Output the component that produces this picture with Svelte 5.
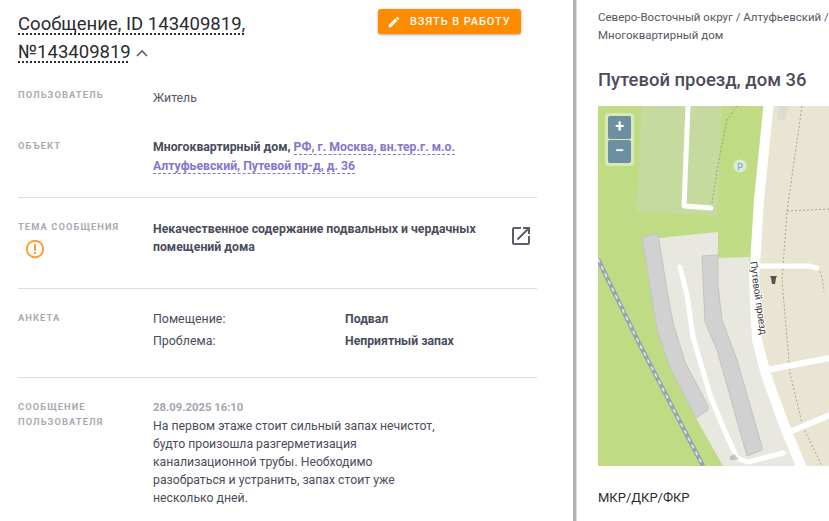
<script>
  const anketa = [
    ['Помещение:', 'Подвал'],
    ['Проблема:', 'Неприятный запах']
  ];
</script>

<div class="page">
  <section class="left">
    <header class="head">
      <h1><span class="dotted">Сообщение, ID 143409819, №143409819</span>
        <svg class="chev" viewBox="0 0 14 8" width="14" height="8"><path d="M2 7l5-5 5 5" fill="none" stroke="#5b5e6b" stroke-width="1.6"/></svg>
      </h1>
      <button class="take">
        <svg viewBox="0 0 24 24" width="14" height="14"><path fill="#fff" d="M3 17.25V21h3.75L17.81 9.94l-3.75-3.75L3 17.25zM20.71 7.04a1 1 0 0 0 0-1.41l-2.34-2.34a1 1 0 0 0-1.41 0l-1.83 1.83 3.75 3.75 1.83-1.83z"/></svg>
        <span>Взять в работу</span>
      </button>
    </header>

    <div class="row r-user">
      <div class="label">Пользователь</div>
      <div class="value plain">Житель</div>
    </div>
    <div class="row r-obj sep">
      <div class="label">Объект</div>
      <div class="value strong narrow">Многоквартирный дом, <a class="addr">РФ, г. Москва, вн.тер.г. м.о. Алтуфьевский, Путевой пр-д, д. 36</a></div>
    </div>
    <div class="row r-theme sep">
      <div class="label">Тема сообщения
        <svg class="warn" viewBox="0 0 20 20" width="20" height="20"><circle cx="10" cy="10" r="8.2" fill="none" stroke="#ff9a2e" stroke-width="1.9"/><rect x="9" y="5.3" width="2" height="6.4" fill="#ff9a2e"/><rect x="9" y="13" width="2" height="2" fill="#ff9a2e"/></svg>
      </div>
      <div class="value strong theme">Некачественное содержание подвальных и чердачных помещений дома</div>
      <svg class="ext" viewBox="0 0 24 24" width="24" height="24"><path fill="#5b5e6b" d="M19 19H5V5h7V3H5a2 2 0 0 0-2 2v14a2 2 0 0 0 2 2h14a2 2 0 0 0 2-2v-7h-2v7zM14 3v2h3.59l-9.83 9.83 1.41 1.41L19 6.41V10h2V3h-7z"/></svg>
    </div>
    <div class="row r-form sep">
      <div class="label">Анкета</div>
      <div class="qa">
        {#each anketa as [q, a]}
          <div class="q">{q}</div>
          <div class="a">{a}</div>
        {/each}
      </div>
    </div>
    <div class="row r-msg">
      <div class="label two">Сообщение пользователя</div>
      <div class="msg">
        <div class="date">28.09.2025 16:10</div>
        <p>На первом этаже стоит сильный запах нечистот, будто произошла разгерметизация канализационной трубы. Необходимо разобраться и устранить, запах стоит уже несколько дней.</p>
      </div>
    </div>
  </section>

  <section class="right">
    <div class="crumbs">Северо-Восточный округ / Алтуфьевский / Многоквартирный дом</div>
    <h2>Путевой проезд, дом 36</h2>
    <div class="map">
      <svg viewBox="598 106 231 360" width="231" height="360">
        <rect x="598" y="106" width="231" height="360" fill="#bfdc85"/>
        <polygon points="642,106 722,106 717,216 636,211" fill="#c6d99f"/>
        <polygon points="770,106 829,106 829,466 790,466 755,370 751,280" fill="#e9e5d2"/>
        <polygon points="642,237 659,238 718,232 718,258 749,257 752,300 760,360 805,466 723,466 697,420 670,368 657,330" fill="#e8e8e0"/>
        <polygon points="778,106 789,106 785,120 777,120" fill="#dcdcd0"/>

        <g fill="none" stroke="#aaa68e" stroke-width="1" stroke-dasharray="2 2">
          <path d="M802 106 L787 211 L782 280 L790 373 L803 427 L822 466"/>
          <path d="M787 211 L829 209"/>
          <path d="M818 268 Q823 276 824 292"/>
        </g>
        <path d="M737 106 L727 120 L718 165 L712 203" fill="none" stroke="#8fa66a" stroke-width="1" stroke-dasharray="2 2"/>

        <path d="M598 259 L610 284 L640 345 L703 466" fill="none" stroke="#97a6ae" stroke-width="4.5"/>
        <path d="M598 259 L610 284 L640 345 L703 466" fill="none" stroke="#e8ece8" stroke-width="1.6" stroke-dasharray="4 4"/>

        <g fill="none" stroke="#fff" stroke-linecap="round" stroke-linejoin="round">
          <path d="M688 106 L684 206 L711 208" stroke-width="5"/>
          <path d="M680 267 L687 295 L693 337 L710 395 L723 427 L737 458 L748 462 L783 453" stroke-width="5"/>
          <path d="M767 370 L835 357" stroke-width="6"/>
          <path d="M787 433 L835 413" stroke-width="6"/>
          <path d="M760 266 L809 266 L817 268" stroke-width="5"/>
          <path d="M769 100 L759 200 L754 280 L757 340 L766 375 L786 430 L805 475" stroke-width="10" stroke-linecap="butt"/>
        </g>

        <polygon points="642,237 658,234 667,290 673,323 685,362 708,406 708,410 696,418 670,368 657,330" fill="#d1d1d1" stroke="#c3c3bd"/>
        <polygon points="702,256 718,255 718,285 722,320 737,360 762,447 762,450 747,456 717,350 705,322" fill="#d1d1d1" stroke="#c3c3bd"/>

        <circle cx="740" cy="166" r="6.5" fill="#dfead0"/>
        <text x="740" y="170" class="mp">P</text>
        <text class="street" transform="translate(750 262) rotate(82)">Путевой проезд</text>
        <path d="M770 276h7l-1 2-1 6h-3l-1-6z" fill="#555"/>
        <path d="M731 460v-4M733 460v-6M735 460v-5M737 460v-3" stroke="#999" stroke-width="1"/>
      </svg>
      <div class="zoom">
        <div class="zb">+</div>
        <div class="zb">−</div>
      </div>
    </div>
    <div class="sub">МКР/ДКР/ФКР</div>
  </section>
</div>

<style>
  :global(body) { margin: 0; background: #fff; overflow: hidden; }
  * { box-sizing: border-box; }
  .page {
    display: flex; width: 829px; height: 521px; overflow: hidden;
    font-family: Roboto, sans-serif; color: #4a4d5b;
  }
  .left {
    width: 576px; flex: none; height: 521px; overflow: hidden;
    padding: 8px 36px 0 18px; border-right: 3px solid #b2b2b2;
  }
  .head { display: flex; justify-content: space-between; align-items: flex-start; height: 62px; }
  h1 { margin: 0; width: 240px; font-size: 18.55px; line-height: 28px; padding-top: 2px; font-weight: 400; color: #2b2b2f; }
  .dotted { text-decoration: underline dotted #2b2b2f 1.5px; text-underline-offset: 3px; }
  .chev { margin-left: 0; position: relative; top: -1px; }
  .take {
    margin: 1px 16px 0 0; width: 143px; height: 25px; padding: 0 0 0 9px; border: 0; border-radius: 3px;
    background: #ff8c00; color: #fff; display: flex; align-items: center; gap: 9px;
    font: 500 11px Roboto, sans-serif; letter-spacing: .92px; text-transform: uppercase;
    box-shadow: 0 1px 3px rgba(0,0,0,.35);
  }
  .row { display: grid; grid-template-columns: 135px 1fr; position: relative; }
  .sep { border-bottom: 1px solid #dedede; }
  .label {
    font-size: 9.4px; font-weight: 700; letter-spacing: 1.05px; text-transform: uppercase;
    color: #a9abb3; line-height: 14px;
  }
  .value { font-size: 12.25px; line-height: 18px; }
  .plain { font-size: 12.25px; color: #55585f; }
  .strong { font-weight: 700; }
  .narrow { width: 320px; }
  .addr { color: #8677cc; border-bottom: 1px dashed #8677cc; }
  .r-user { padding-top: 18px; height: 57px; }
  .r-user .value { margin-top: 1px; }
  .r-obj { height: 71px; padding-top: 12px; }
  .r-obj .value { margin-top: -1px; line-height: 19px; }
  .r-theme { height: 91px; padding-top: 22px; }
  .r-theme .value { width: 335px; line-height: 18px; }
  .warn { display: block; margin: 5px 0 0 7px; }
  .ext { position: absolute; left: 491px; top: 26px; }
  .r-form { height: 89px; padding-top: 22px; }
  .qa { display: grid; grid-template-columns: 192px 1fr; align-content: start; row-gap: 4px; margin-top: -1px; font-size: 12.4px; line-height: 18px; }
  .a { font-weight: 700; font-size: 12.25px; }
  .r-msg { padding-top: 21px; }
  .label.two { line-height: 15px; width: 90px; }
  .date { font-size: 11.3px; font-weight: 700; color: #a3a5ae; line-height: 16px; margin-top: 1px; }
  p { margin: 1px 0 0; width: 290px; font-size: 12.25px; line-height: 18px; }
  .right { flex: 1; min-width: 0; overflow: hidden; border-left: 1px solid #dcdcdc; padding: 8px 0 0 21px; white-space: normal; }
  .crumbs { width: 235px; font-size: 11.5px; line-height: 18px; color: #55585f; }
  h2 { margin: 24px 0 0; font-size: 18.45px; line-height: 24px; font-weight: 500; color: #4a4d5b; white-space: nowrap; }
  .map { position: relative; width: 231px; height: 360px; margin-top: 14px; }
  .map svg { display: block; }
  .mp { font: 500 9px Roboto, sans-serif; fill: #6eb4e6; text-anchor: middle; }
  .street { font: 10px "Liberation Sans", sans-serif; fill: #333; stroke: #fff; stroke-width: 2px; paint-order: stroke; }
  .zoom {
    position: absolute; left: 7px; top: 7px; padding: 3px; border-radius: 4px;
    background: rgba(255,255,255,.4);
  }
  .zb {
    width: 23px; height: 23px; background: #6d8fa2; color: #fff; font: 700 16px/22px Roboto, sans-serif;
    text-align: center; border-radius: 2px;
  }
  .zb + .zb { margin-top: 1px; }
  .sub { margin-top: 24px; font-size: 13px; line-height: 16px; color: #2b2b2f; font-weight: 400; }
</style>
